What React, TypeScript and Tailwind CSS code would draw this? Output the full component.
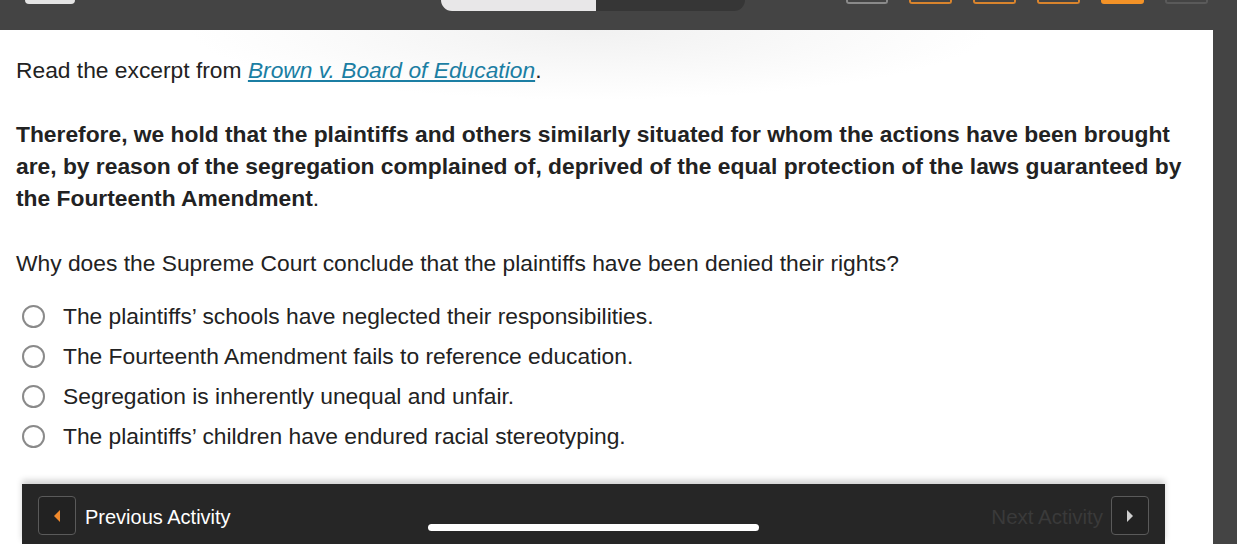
import React from 'react';

const OPTIONS = [
  'The plaintiffs’ schools have neglected their responsibilities.',
  'The Fourteenth Amendment fails to reference education.',
  'Segregation is inherently unequal and unfair.',
  'The plaintiffs’ children have endured racial stereotyping.',
];

export default function App() {
  return (
    <div
      className="relative w-[1237px] h-[544px] overflow-hidden flex bg-[#444444] text-[#222]"
      style={{ fontFamily: '"Liberation Sans", Arial, sans-serif' }}
    >
      <div className="w-[1213px] flex flex-col">
        {/* top bar */}
        <div className="h-[30px] shrink-0 bg-[#444444] flex items-start pl-[25px]">
          <div className="w-[50px] h-[4px] rounded-b-[4px] bg-[#e4e4e4]" />
          <div className="ml-[366px] w-[304px] h-[11px] flex rounded-b-[12px] overflow-hidden">
            <div className="w-[155px] bg-[#e8e7e8]" />
            <div className="flex-1 bg-[#363636]" />
          </div>
          <div className="ml-[101px] flex gap-[21px]">
            <div className="w-[42px] h-[4px] rounded-b-[3px] border-2 border-t-0 border-[#8a8a8a]" />
            <div className="w-[43px] h-[4px] rounded-b-[3px] border-2 border-t-0 border-[#d9842d]" />
            <div className="w-[43px] h-[4px] rounded-b-[3px] border-2 border-t-0 border-[#d9842d]" />
            <div className="w-[43px] h-[4px] rounded-b-[3px] border-2 border-t-0 border-[#d9842d]" />
            <div className="w-[43px] h-[4px] rounded-b-[3px] bg-[#f39227]" />
            <div className="w-[43px] h-[4px] rounded-b-[3px] border-2 border-t-0 border-[#5a5a5a]" />
          </div>
        </div>

        {/* content */}
        <div className="flex-1 bg-white bg-[radial-gradient(ellipse_400px_70px_at_590px_0px,#f1f1f1,#ffffff)] flex flex-col">
          <div className="px-4 pt-[26px]">
            <p className="text-[22.8px] leading-[28px]">
              Read the excerpt from{' '}
              <span className="italic underline text-[#1b7ea3]">Brown v. Board of Education</span>.
            </p>

            <p className="mt-[34px] text-[22.8px] leading-[32px] font-bold whitespace-nowrap">
              Therefore, we hold that the plaintiffs and others similarly situated for whom the actions have been brought
              <br />
              are, by reason of the segregation complained of, deprived of the equal protection of the laws guaranteed by
              <br />
              the Fourteenth Amendment<span className="font-normal">.</span>
            </p>

            <p className="mt-[35px] text-[22.8px] leading-[28px]">
              Why does the Supreme Court conclude that the plaintiffs have been denied their rights?
            </p>

            <div className="mt-[19px] pl-[6px]">
              {OPTIONS.map((o) => (
                <label key={o} className="h-[40px] flex items-center gap-[18px] text-[22.8px]">
                  <span className="w-[23px] h-[23px] rounded-full border-2 border-[#8a8a8a] bg-white shrink-0" />
                  {o}
                </label>
              ))}
            </div>
          </div>

          {/* activity nav */}
          <div className="mt-[28px] ml-[22px] w-[1143px] h-[60px] shrink-0 bg-[#262626] shadow-[0_-4px_6px_rgba(0,0,0,0.18)] flex items-start justify-between px-4 pt-[12px]">
            <div className="flex items-center gap-[9px]">
              <button className="w-[38px] h-[39px] rounded-[4px] border border-[#5a5a5a] bg-[#222] flex items-center justify-center">
                <svg width="8" height="14" viewBox="0 0 8 14">
                  <path d="M7 1 L1 7 L7 13 Z" fill="#f0892c" />
                </svg>
              </button>
              <span className="text-[20px] leading-[24px] mt-[3px] text-white">Previous Activity</span>
            </div>
            <div className="flex items-center gap-[8px]">
              <span className="text-[20.5px] leading-[24px] mt-[3px] text-[#3a3a3a]">Next Activity</span>
              <button className="w-[38px] h-[39px] rounded-[4px] border border-[#5a5a5a] bg-[#222] flex items-center justify-center">
                <svg width="8" height="14" viewBox="0 0 8 14">
                  <path d="M1 1 L7 7 L1 13 Z" fill="#cfcfcf" />
                </svg>
              </button>
            </div>
          </div>
        </div>
      </div>

      {/* right rail */}
      <div className="flex-1 bg-[#444444]" />

      {/* home indicator */}
      <div className="absolute left-[428px] top-[524px] w-[331px] h-[7px] rounded-full bg-white" />
    </div>
  );
}
